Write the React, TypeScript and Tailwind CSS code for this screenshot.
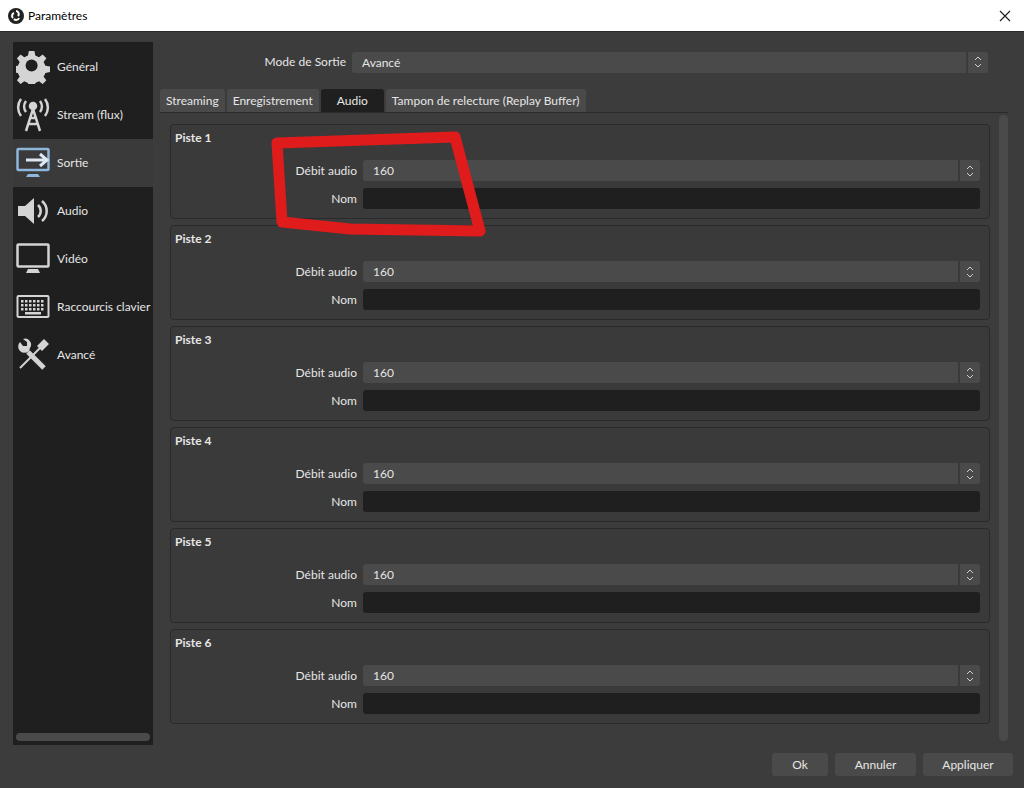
import React from "react";

const F = { fontFamily: 'Lato, "Noto Sans", sans-serif' };

function Spin() {
  return (
    <div className="w-[20px] h-full flex items-center justify-center bg-[#4a4a4a] ml-[2px] rounded-r-[3px]">
      <svg width="8" height="14" viewBox="0 0 8 14" fill="none" stroke="#cfcfcf" strokeWidth="1">
        <path d="M1 5 L4 2 L7 5" />
        <path d="M1 9 L4 12 L7 9" />
      </svg>
    </div>
  );
}

function Group({ n }: { n: number }) {
  return (
    <div className="border border-[#2a2a2a] rounded-[4px] bg-[#3a3a3a] h-[95px] ml-[10px] mr-[9px] mb-[6px] relative">
      <div className="absolute left-[4px] top-[4px] text-[12px] font-bold text-[#e6e6e6]">Piste {n}</div>
      <div className="flex items-center mt-[35px] pr-[9px]">
        <div className="w-[192px] text-right pr-[6px] text-[12px] text-[#e6e6e6]">Débit audio</div>
        <div className="flex-1 h-[21px] flex">
          <div className="flex-1 bg-[#4a4a4a] rounded-l-[3px] text-[12px] text-[#e6e6e6] pl-[10px] leading-[21px]">160</div>
          <Spin />
        </div>
      </div>
      <div className="flex items-center mt-[7px] pr-[9px]">
        <div className="w-[192px] text-right pr-[6px] text-[12px] text-[#e6e6e6]">Nom</div>
        <div className="flex-1 h-[21px] bg-[#1f1f1f] rounded-[3px]" />
      </div>
    </div>
  );
}

const W = "#d4d4d4";
const icons: Record<string, React.ReactNode> = {
  gear: (
    <svg width="34" height="34" viewBox="0 0 34 34"><path fill={W} d="M14 1h6l1 5 4 2 4-3 4 4-3 4 2 4 5 1v6l-5 1-2 4 3 4-4 4-4-3-4 2-1 5h-6l-1-5-4-2-4 3-4-4 3-4-2-4-5-1v-6l5-1 2-4-3-4 4-4 4 3 4-2z" transform="translate(0 0) scale(0.92)"/><circle cx="15.6" cy="15.6" r="6" fill="#1f1f1f"/></svg>
  ),
  stream: (
    <svg width="34" height="34" viewBox="0 0 34 34" fill="none" stroke={W} strokeWidth="2.5"><circle cx="17" cy="8" r="3" fill={W}/><path d="M10 3a9 9 0 0 0 0 11M24 3a9 9 0 0 1 0 11M5 1a14 14 0 0 0 0 17M29 1a14 14 0 0 1 0 17"/><path d="M17 11 L10 33 M17 11 L24 33 M12 26 H22 M13 20 H21"/></svg>
  ),
  out: (
    <svg width="34" height="34" viewBox="0 0 34 34" fill="none"><rect x="1.5" y="3" width="31" height="21" rx="1" stroke="#8fb7dc" strokeWidth="2.5"/><path d="M12 28 h10 l2 3 H10z" fill="#8fb7dc"/><path d="M10 14 H30 M24 8 L31 14 L24 20" stroke="#dce7f2" strokeWidth="3"/></svg>
  ),
  audio: (
    <svg width="34" height="34" viewBox="0 0 34 34"><path d="M2 12 h7 l9-8 v26 l-9-8 H2z" fill={W}/><path d="M22 11a8 8 0 0 1 0 12M26 7a13 13 0 0 1 0 20" stroke={W} strokeWidth="2.5" fill="none"/></svg>
  ),
  video: (
    <svg width="34" height="34" viewBox="0 0 34 34" fill="none"><rect x="1.5" y="2.5" width="31" height="22" rx="1" stroke={W} strokeWidth="2.5"/><path d="M12 27 h10 l2 4 H10z" fill={W}/></svg>
  ),
  kb: (
    <svg width="34" height="34" viewBox="0 0 34 34" fill="none"><rect x="1.5" y="6" width="31" height="21" rx="1" stroke={W} strokeWidth="2"/>{[10, 14, 18].map(y => [5, 9, 13, 17, 21, 25].map(x => <rect key={x + "-" + y} x={x} y={y} width="2.5" height="2.5" fill={W}/>))}<rect x="9" y="22" width="16" height="2.5" fill={W}/></svg>
  ),
  adv: (
    <svg width="34" height="34" viewBox="0 0 34 34" fill="none"><path d="M4 30 L24 10" stroke={W} strokeWidth="2"/><path d="M21 8 l7-7 l5 5 l-7 7z" fill={W}/><path d="M28 30 L12 14" stroke={W} strokeWidth="5"/><path d="M13 13 A6 6 0 0 1 4 4 l3 4 h4 v-4 l-4-3 A6 6 0 0 1 14 10z" fill={W}/></svg>
  ),
};

const items = [
  ["gear", "Général"],
  ["stream", "Stream (flux)"],
  ["out", "Sortie"],
  ["audio", "Audio"],
  ["video", "Vidéo"],
  ["kb", "Raccourcis clavier"],
  ["adv", "Avancé"],
];

export default function App() {
  return (
    <div style={F} className="w-[1024px] h-[788px] bg-[#3c3c3c] relative overflow-hidden flex flex-col">
      <div className="h-[32px] bg-white flex items-center border-b border-[#2b2b2b]">
        <svg className="ml-[8px]" width="16" height="16" viewBox="0 0 16 16"><circle cx="8" cy="8" r="8" fill="#222"/><path d="M8 3a3 3 0 0 1 2 5M5 10a3 3 0 0 1 1-5M11 10a3 3 0 0 1-5 1" stroke="#fff" strokeWidth="2" fill="none"/></svg>
        <span className="ml-[4px] text-[12px] text-black">Paramètres</span>
        <div className="flex-1" />
        <svg className="mr-[13px]" width="12" height="12" viewBox="0 0 12 12" stroke="#222" strokeWidth="1.2"><path d="M1 1 L11 11 M11 1 L1 11"/></svg>
      </div>
      <div className="flex flex-1 pt-[10px]">
        <div className="ml-[13px] w-[140px] h-[703px] bg-[#1f1f1f] flex flex-col relative">
          <div className="pt-[1px]">
            {items.map(([k, l]) => (
              <div key={k} className={"h-[48px] flex items-center pl-[3px] text-[12px] text-[#e6e6e6] whitespace-nowrap " + (k === "out" ? "bg-[#3a3a3a]" : "")}>
                <div className="w-[34px] h-[34px] mr-[7px]">{icons[k]}</div>
                {l}
              </div>
            ))}
          </div>
          <div className="absolute left-[3px] right-[3px] bottom-[4px] h-[8px] rounded-full bg-[#4a4a4a]" />
        </div>
        <div className="flex-1 flex flex-col ml-[7px] mr-[16px] pt-[9px]">
          <div className="flex items-center h-[22px] mb-[16px]">
            <div className="w-[192px] text-right pr-[6px] text-[12px] text-[#e6e6e6]">Mode de Sortie</div>
            <div className="flex-1 h-[21px] flex">
              <div className="flex-1 bg-[#4a4a4a] rounded-l-[3px] text-[12px] text-[#e6e6e6] pl-[10px] leading-[21px]">Avancé</div>
              <Spin />
            </div>
            <div className="w-[20px]" />
          </div>
          <div className="flex items-end h-[24px] border-b border-[#2a2a2a] gap-[2px]">
            {["Streaming", "Enregistrement", "Audio", "Tampon de relecture (Replay Buffer)"].map(t => (
              <div key={t} className={"h-[23px] px-[6px] flex items-center text-[12px] text-[#e6e6e6] rounded-t-[3px] " + (t === "Audio" ? "bg-[#1f1f1f] px-[16px]" : "bg-[#4a4a4a]")}>{t}</div>
            ))}
          </div>
          <div className="flex flex-1">
            <div className="flex-1 pt-[11px]">
              {[1, 2, 3, 4, 5, 6].map(n => <Group key={n} n={n} />)}
            </div>
            <div className="w-[9px] mt-[2px] h-[626px] rounded-full bg-[#4a4a4a]" />
          </div>
        </div>
      </div>
      <div className="absolute left-[772px] top-[753px] flex gap-[7px]">
        <div className="w-[56px] h-[23px] rounded-[3px] bg-[#4a4a4a] text-[12px] text-[#e6e6e6] flex items-center justify-center">Ok</div>
        <div className="w-[81px] h-[23px] rounded-[3px] bg-[#4a4a4a] text-[12px] text-[#e6e6e6] flex items-center justify-center">Annuler</div>
        <div className="w-[90px] h-[23px] rounded-[3px] bg-[#4a4a4a] text-[12px] text-[#e6e6e6] flex items-center justify-center">Appliquer</div>
      </div>
      <svg className="absolute left-0 top-0 pointer-events-none" width="1024" height="788">
        <path d="M277 143 L455 137 L480 231 L350 229 L282 222 Z" fill="none" stroke="#e01b1b" strokeWidth="11" strokeLinejoin="round" />
      </svg>
    </div>
  );
}
